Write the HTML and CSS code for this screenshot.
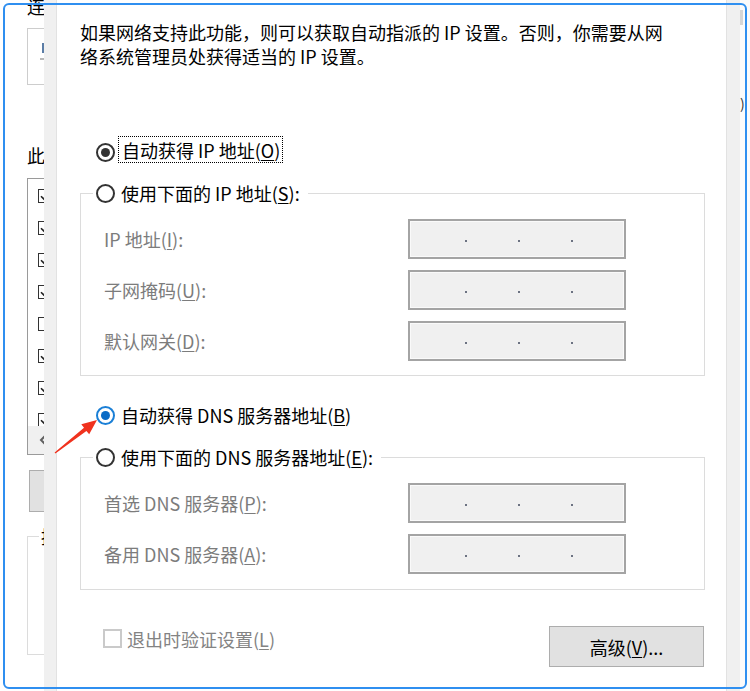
FILE: index.html
```html
<!DOCTYPE html>
<html lang="zh-CN">
<head>
<meta charset="utf-8">
<title>Internet 协议版本 4 (TCP/IPv4) 属性</title>
<link rel="stylesheet" href="styles.css">
</head>
<body>
<div class="screen">
  <div class="bgwin">
    <div class="bg-text bg-connect">连接时使用:</div>
    <div class="bg-adapter"><span class="bg-adapter-icon"></span><span class="bg-adapter-line"></span></div>
    <div class="bg-text bg-items-label">此连接使用下列项目:</div>
    <div class="bg-list">
      <div class="bg-list-items">
        <div class="bg-item"><svg width="14" height="14" viewBox="0 0 14 14"><rect x="0.5" y="0.5" width="13" height="13" fill="#fff" stroke="#333"/><path d="M3 7.2 L5.8 10 L11 3.8" fill="none" stroke="#222" stroke-width="1.6"/></svg></div>
        <div class="bg-item"><svg width="14" height="14" viewBox="0 0 14 14"><rect x="0.5" y="0.5" width="13" height="13" fill="#fff" stroke="#333"/><path d="M3 7.2 L5.8 10 L11 3.8" fill="none" stroke="#222" stroke-width="1.6"/></svg></div>
        <div class="bg-item"><svg width="14" height="14" viewBox="0 0 14 14"><rect x="0.5" y="0.5" width="13" height="13" fill="#fff" stroke="#333"/><path d="M3 7.2 L5.8 10 L11 3.8" fill="none" stroke="#222" stroke-width="1.6"/></svg></div>
        <div class="bg-item"><svg width="14" height="14" viewBox="0 0 14 14"><rect x="0.5" y="0.5" width="13" height="13" fill="#fff" stroke="#333"/><path d="M3 7.2 L5.8 10 L11 3.8" fill="none" stroke="#222" stroke-width="1.6"/></svg></div>
        <div class="bg-item"><svg width="14" height="14" viewBox="0 0 14 14"><rect x="0.5" y="0.5" width="13" height="13" fill="#fff" stroke="#333"/></svg></div>
        <div class="bg-item"><svg width="14" height="14" viewBox="0 0 14 14"><rect x="0.5" y="0.5" width="13" height="13" fill="#fff" stroke="#333"/><path d="M3 7.2 L5.8 10 L11 3.8" fill="none" stroke="#222" stroke-width="1.6"/></svg></div>
        <div class="bg-item"><svg width="14" height="14" viewBox="0 0 14 14"><rect x="0.5" y="0.5" width="13" height="13" fill="#fff" stroke="#333"/><path d="M3 7.2 L5.8 10 L11 3.8" fill="none" stroke="#222" stroke-width="1.6"/></svg></div>
        <div class="bg-item"><svg width="14" height="14" viewBox="0 0 14 14"><rect x="0.5" y="0.5" width="13" height="13" fill="#fff" stroke="#333"/><path d="M3 7.2 L5.8 10 L11 3.8" fill="none" stroke="#222" stroke-width="1.6"/></svg></div>
      </div>
      <div class="bg-scroll"><svg class="bg-scroll-arrow" width="8" height="10" viewBox="0 0 8 10"><path d="M6 1 L2 5 L6 9" fill="none" stroke="#606060" stroke-width="2"/></svg></div>
    </div>
    <div class="bg-button"></div>
    <div class="bg-group"><span class="bg-legend">描述</span></div>
  </div>

  <div class="frame-left"></div>

  <main class="page">
    <p class="intro">如果网络支持此功能，则可以获取自动指派的 IP 设置。否则，你需要从网<br>络系统管理员处获得适当的 IP 设置。</p>

    <div class="opt opt-first">
      <span class="radio checked"></span>
      <span class="focus">自动获得 IP 地址(<u>O</u>)</span>
    </div>

    <div class="group group-ip">
      <div class="legend">
        <span class="radio"></span>
        <span class="opt-text">使用下面的 IP 地址(<u>S</u>):</span>
      </div>
      <div class="field-row first"><span class="lbl">IP 地址(<u>I</u>):</span><span class="ip"><i></i><i></i><i></i></span></div>
      <div class="field-row"><span class="lbl">子网掩码(<u>U</u>):</span><span class="ip"><i></i><i></i><i></i></span></div>
      <div class="field-row"><span class="lbl">默认网关(<u>D</u>):</span><span class="ip"><i></i><i></i><i></i></span></div>
    </div>

    <div class="opt opt-dns">
      <span class="radio checked blue"></span>
      <span class="opt-text">自动获得 DNS 服务器地址(<u>B</u>)</span>
    </div>

    <div class="group group-dns">
      <div class="legend">
        <span class="radio"></span>
        <span class="opt-text">使用下面的 DNS 服务器地址(<u>E</u>):</span>
      </div>
      <div class="field-row first"><span class="lbl">首选 DNS 服务器(<u>P</u>):</span><span class="ip"><i></i><i></i><i></i></span></div>
      <div class="field-row"><span class="lbl">备用 DNS 服务器(<u>A</u>):</span><span class="ip"><i></i><i></i><i></i></span></div>
    </div>

    <div class="bottom">
      <div class="check-item"><span class="checkbox"></span><span class="check-text">退出时验证设置(<u>L</u>)</span></div>
      <div class="btn">高级(<u>V</u>)...</div>
    </div>
  </main>

  <div class="frame-right"></div>
  <div class="bg-right"><span class="bg-right-mark"></span><span class="bg-right-text">)</span></div>

  <div class="accent"></div>
  <svg class="arrow" width="750" height="691" viewBox="0 0 750 691">
    <polygon points="54.6,452.5 84.0,427.7 81.3,424.3 97,420 89.2,434.2 86.4,430.9 55.4,453.5" fill="#f0321e"/>
  </svg>
</div>
</body>
</html>
```

FILE: styles.css
```css
* {
  box-sizing: border-box;
  margin: 0;
  padding: 0;
}

html, body {
  width: 750px;
  height: 691px;
  overflow: hidden;
  background: #fff;
}

body {
  font-family: "Noto Sans CJK SC", "Microsoft YaHei", sans-serif;
  font-size: 18px;
  line-height: 24px;
  color: #000;
}

u {
  text-decoration: underline;
  text-underline-offset: 2px;
}

.screen {
  position: relative;
  display: flex;
  width: 750px;
  height: 691px;
}

/* ---------- background window (left) ---------- */
.bgwin {
  width: 44px;
  flex: none;
  overflow: hidden;
  padding-left: 27px;
  background: #fff;
}

.bg-text {
  width: 200px;
  white-space: nowrap;
  height: 24px;
}

.bg-connect {
  margin-top: -6px;
}

.bg-adapter {
  position: relative;
  width: 120px;
  height: 57px;
  margin-top: 10px;
  border: 1px solid #cdcdcd;
  display: flex;
  flex-direction: column;
  padding: 14px 0 0 14px;
}

.bg-adapter-icon {
  width: 4px;
  height: 10px;
  background: #5b7da6;
}

.bg-adapter-line {
  width: 6px;
  height: 2px;
  margin-top: 5px;
  margin-left: -2px;
  background: #b8b8b8;
}

.bg-items-label {
  margin-top: 58px;
}

.bg-list {
  width: 120px;
  height: 277px;
  margin-top: 11px;
  border: 1px solid #9a9a9a;
}

.bg-list-items {
  height: 247px;
  overflow: hidden;
  padding-top: 1px;
}

.bg-item {
  height: 32px;
  display: flex;
  align-items: center;
  padding-left: 10px;
}

.bg-item svg {
  display: block;
}

.bg-scroll {
  height: 28px;
  background: #f0f0f0;
  display: flex;
  align-items: center;
  padding-left: 11px;
}

.bg-button {
  width: 120px;
  height: 42px;
  margin: 15px 0 0 2px;
  background: #e1e1e1;
  border: 1px solid #adadad;
}

.bg-group {
  width: 120px;
  height: 119px;
  margin-top: 24px;
  border: 1px solid #dcdcdc;
}

.bg-legend {
  display: block;
  width: fit-content;
  margin: -13px 0 0 11px;
  padding: 0 2px;
  background: #fff;
  white-space: nowrap;
  line-height: 24px;
}

/* ---------- dialog frame ---------- */
.frame-left {
  width: 13px;
  flex: none;
  background: #f0f0f0;
  border-right: 1px solid #e2e2e2;
}

.frame-right {
  width: 14px;
  flex: none;
  background: #f0f0f0;
  border-left: 1px solid #e2e2e2;
}

.bg-right {
  width: 10px;
  flex: none;
  background: #fbfbfb;
  display: flex;
  flex-direction: column;
  overflow: hidden;
}

.bg-right-mark {
  width: 3px;
  height: 15px;
  margin-top: 10px;
  background: #d6d6d6;
}

.bg-right-text {
  margin-top: 68px;
  font-size: 14px;
  line-height: 20px;
  color: #333;
}

/* ---------- page ---------- */
.page {
  width: 669px;
  flex: none;
  padding: 20px 0 0 23px;
  background: #fff;
}

.intro {
  white-space: nowrap;
}

.opt {
  display: flex;
  align-items: center;
  height: 26px;
  margin-left: 16px;
}

.opt-first {
  align-items: flex-start;
  height: 27px;
  margin-top: 68px;
}

.opt-first .radio {
  margin-top: 7px;
}

.focus {
  height: 27px;
  margin-left: 3px;
  padding: 1px 2px 0 3px;
  border: 1px dotted #000;
  white-space: nowrap;
}

.radio {
  flex: none;
  width: 19px;
  height: 19px;
  border: 2px solid #333;
  border-radius: 50%;
  background: #fff;
  display: flex;
  align-items: center;
  justify-content: center;
}

.radio.checked::after {
  content: "";
  width: 9px;
  height: 9px;
  border-radius: 50%;
  background: #333;
}

.radio.blue {
  border-color: #1a7fd6;
}

.radio.blue::after {
  background: #0a6bc6;
}

.opt-text {
  margin-left: 6px;
  white-space: nowrap;
}

.group {
  width: 625px;
  border: 1px solid #dcdcdc;
  padding: 0 78px 14px 23px;
}

.group-ip {
  margin-top: 30px;
}

.group-dns {
  margin-top: 29px;
  padding-bottom: 15px;
}

.legend {
  display: flex;
  align-items: center;
  width: fit-content;
  height: 26px;
  margin: -14px 0 0 -11px;
  padding: 0 8px 0 3px;
  background: #fff;
}

.field-row {
  display: flex;
  justify-content: space-between;
  align-items: center;
  height: 40px;
  margin-top: 11px;
}

.field-row.first {
  margin-top: 13px;
}

.lbl {
  color: #7c7c7c;
  white-space: nowrap;
}

.ip {
  width: 218px;
  height: 40px;
  background: #f0f0f0;
  border: 2px solid #a4a4a4;
  box-shadow: inset 1px 1px 0 #fafafa, inset -1px -1px 0 #fafafa;
  display: flex;
  align-items: center;
  gap: 51px;
  padding: 4px 0 0 55px;
}

.ip i {
  width: 2px;
  height: 2px;
  background: #6c7282;
}

.opt-dns {
  margin-top: 26px;
}

.bottom {
  display: flex;
  justify-content: space-between;
  align-items: flex-start;
  width: 624px;
  margin-top: 36px;
  padding-left: 23px;
}

.check-item {
  display: flex;
  align-items: center;
  height: 19px;
  margin-top: 3px;
  color: #838383;
}

.checkbox {
  flex: none;
  width: 19px;
  height: 19px;
  border: 2px solid #cacaca;
  background: #fff;
}

.check-text {
  margin-left: 5px;
  white-space: nowrap;
}

.btn {
  width: 155px;
  height: 41px;
  display: flex;
  align-items: center;
  justify-content: center;
  background: #e1e1e1;
  border: 1px solid #adadad;
  white-space: nowrap;
}

/* ---------- overlays ---------- */
.accent {
  position: absolute;
  left: 3px;
  top: 3px;
  width: 744px;
  height: 686px;
  border: 2px solid #2f8ff0;
  border-radius: 6px;
  pointer-events: none;
}

.arrow {
  position: absolute;
  left: 0;
  top: 0;
  pointer-events: none;
}
```
